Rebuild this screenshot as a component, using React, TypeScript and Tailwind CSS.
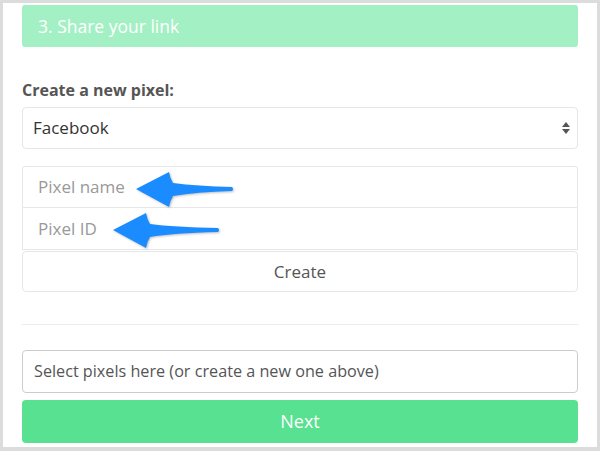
function Arrow({ className, length }: { className: string; length: number }) {
  const t = length - 2;
  return (
    <svg
      className={className}
      width={length + 4}
      height="40"
      viewBox={`-2 -20 ${length + 4} 40`}
      style={{ filter: 'drop-shadow(1px 1px 1px rgba(0,0,0,0.25))' }}
    >
      <path
        d={`M0 0 L33 -17 Q34 -11 37 -6 Q60 -3 ${t} -2 Q${t + 2} 0 ${t} 2 Q60 3 37 7 Q34 12 33 18 Z`}
        fill="#1a8cff"
      />
    </svg>
  );
}

export default function App() {
  return (
    <div className="w-[600px] h-[451px] bg-[#dcdcdc] pt-[3px] pl-[3px] pr-[3px] pb-[4px] font-['Open_Sans',sans-serif]">
      <div className="h-full bg-white px-[19px] pt-[2px] flex flex-col">
        <div className="h-[42px] rounded-[3px] bg-[#a3f0c4] flex items-center pl-[16px] text-white text-[17.5px]">
          3. Share your link
        </div>

        <div className="mt-[33px] h-[20px] flex items-center text-[16px] font-bold text-[#555]">
          Create a new pixel:
        </div>

        <div className="mt-[7px] h-[42px] rounded-[4px] border border-[#e6e6e6] flex items-center justify-between pl-[10px] pr-[7px] text-[17px] text-[#333]">
          <span>Facebook</span>
          <span className="flex flex-col items-center gap-[2px]">
            <svg width="8" height="5" viewBox="0 0 8 5"><path d="M4 0 L8 5 L0 5 Z" fill="#555" /></svg>
            <svg width="8" height="5" viewBox="0 0 8 5"><path d="M0 0 L8 0 L4 5 Z" fill="#555" /></svg>
          </span>
        </div>

        <div className="mt-[17px] flex flex-col">
          <div className="relative h-[42px] border border-[#e6e6e6] rounded-t-[3px] flex items-center pl-[15px] text-[17px] text-[#999]">
            Pixel name
            <Arrow length={98} className="absolute left-[111px] top-[2px]" />
          </div>
          <div className="relative h-[42px] border border-t-0 border-[#e6e6e6] flex items-center pl-[15px] text-[17px] text-[#999]">
            Pixel ID
            <Arrow length={107} className="absolute left-[88px] top-[2px]" />
          </div>
          <div className="mt-px h-[41px] border border-[#e6e6e6] rounded-[4px] flex items-center justify-center text-[17px] text-[#555]">
            Create
          </div>
        </div>

        <div className="mt-[32px] border-t border-[#ececec]" />

        <div className="mt-[25px] h-[43px] rounded-[4px] border border-[#cccccc] flex items-center pl-[11px] text-[16.2px] text-[#555]">
          Select pixels here (or create a new one above)
        </div>

        <div className="mt-[7px] h-[43px] rounded-[4px] bg-[#57e190] flex items-center justify-center text-white text-[18px]">
          Next
        </div>
      </div>
    </div>
  );
}
